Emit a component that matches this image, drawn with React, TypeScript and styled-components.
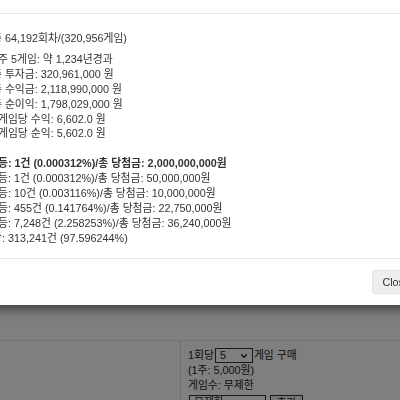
import styled, { createGlobalStyle } from "styled-components";
import { ChevronDown } from "lucide-react";

const GlobalStyle = createGlobalStyle`
    html, body {
        margin: 0;
        padding: 0;
        background: #ffffff;
        overflow: hidden;
    }
    body {
        font-family: "Liberation Sans", "Noto Sans CJK KR", sans-serif;
        font-size: 10.8px;
        line-height: 14.9px;
        color: #333333;
    }
`;

const summary = [
    "1주 5게임: 약 1,234년경과",
    "총 투자금: 320,961,000 원",
    "총 수익금: 2,118,990,000 원",
    "총 순이익: 1,798,029,000 원",
    "1게임당 수익: 6,602.0 원",
    "1게임당 순익: 5,602.0 원",
];

const prizes = [
    { text: "1등: 1건 (0.000312%)/총 당첨금: 2,000,000,000원", strong: true },
    { text: "2등: 1건 (0.000312%)/총 당첨금: 50,000,000원", strong: false },
    { text: "3등: 10건 (0.003116%)/총 당첨금: 10,000,000원", strong: false },
    { text: "4등: 455건 (0.141764%)/총 당첨금: 22,750,000원", strong: false },
    { text: "5등: 7,248건 (2.258253%)/총 당첨금: 36,240,000원", strong: false },
    { text: "꽝: 313,241건 (97.596244%)", strong: false },
];

const App = () => {
    return (
        <>
            <GlobalStyle />
            <StyledPage>
                <StyledTopArea />
                <StyledMainRow>
                    <StyledLeftCol />
                    <StyledRightCol>
                        <StyledLine>
                            1회당
                            <StyledSelect $width={38}>
                                <span>5</span>
                                <ChevronDown size={10} strokeWidth={3} />
                            </StyledSelect>
                            게임 구매
                        </StyledLine>
                        <StyledLine>(1주: 5,000원)</StyledLine>
                        <StyledLine>게임수: 무제한</StyledLine>
                        <StyledControlRow>
                            <StyledSelect $width={77}>
                                <span>무제한</span>
                                <ChevronDown size={10} strokeWidth={3} />
                            </StyledSelect>
                            <StyledSmallButton>추가</StyledSmallButton>
                        </StyledControlRow>
                    </StyledRightCol>
                </StyledMainRow>
            </StyledPage>

            <StyledBackdrop />

            <StyledModal>
                <StyledHeader>
                    <StyledTitle>시뮬레이션 결과</StyledTitle>
                </StyledHeader>
                <StyledBody>
                    <StyledLead>총 64,192회차/(320,956게임)</StyledLead>
                    {summary.map((line, index) => (
                        <StyledLine key={index}>{line}</StyledLine>
                    ))}
                    <StyledSpacer />
                    {prizes.map((prize, index) => (
                        <StyledPrize $strong={prize.strong} key={index}>
                            {prize.text}
                        </StyledPrize>
                    ))}
                </StyledBody>
                <StyledFooter>
                    <StyledCloseButton>Close</StyledCloseButton>
                </StyledFooter>
            </StyledModal>
        </>
    );
};

const StyledPage = styled.div`
    display: flex;
    flex-direction: column;
    width: 400px;
    min-height: 400px;
    background: #ffffff;
`;

const StyledTopArea = styled.div`
    height: 340px;
    border-bottom: 1px solid #e8e8e8;
`;

const StyledMainRow = styled.div`
    display: flex;
`;

const StyledLeftCol = styled.div`
    width: 180px;
    min-height: 80px;
    border-right: 1px solid #e0e0e0;
`;

const StyledRightCol = styled.div`
    display: flex;
    flex-direction: column;
    padding: 7px 0 0 7px;
    color: #222222;
`;

const StyledLine = styled.div`
    display: flex;
    align-items: center;
    white-space: nowrap;
`;

const StyledSelect = styled.span<{ $width: number }>`
    display: inline-flex;
    align-items: center;
    justify-content: space-between;
    box-sizing: border-box;
    width: ${(p) => p.$width}px;
    height: 15px;
    margin: 0 1px;
    padding: 0 3px 0 4px;
    border: 1px solid #333333;
    background: #ffffff;
`;

const StyledControlRow = styled.div`
    display: flex;
    gap: 3px;
    margin-top: 2px;
`;

const StyledSmallButton = styled.span`
    display: inline-flex;
    align-items: center;
    justify-content: center;
    box-sizing: border-box;
    width: 33px;
    height: 17px;
    border: 1px solid #333333;
    background: #efefef;
`;

const StyledBackdrop = styled.div`
    position: fixed;
    inset: 0;
    background: rgba(0, 0, 0, 0.5);
`;

const StyledModal = styled.div`
    position: fixed;
    top: -30px;
    left: -19px;
    width: 450px;
    display: flex;
    flex-direction: column;
    background: #ffffff;
    border-radius: 4px;
    box-shadow: 0 4px 11px rgba(0, 0, 0, 0.5);
`;

const StyledHeader = styled.div`
    height: 43px;
    padding: 0 11px;
    border-bottom: 1px solid #e5e5e5;
`;

const StyledTitle = styled.div`
    padding-top: 8px;
    font-size: 13.5px;
    line-height: 15px;
`;

const StyledBody = styled.div`
    display: flex;
    flex-direction: column;
    padding: 17px 11px 12px;
`;

const StyledLead = styled.div`
    margin-bottom: 6px;
    white-space: nowrap;
`;

const StyledSpacer = styled.div`
    height: 14.9px;
`;

const StyledPrize = styled.div<{ $strong: boolean }>`
    white-space: nowrap;
    font-weight: ${(p) => (p.$strong ? "bold" : "normal")};
`;

const StyledFooter = styled.div`
    display: flex;
    justify-content: flex-end;
    padding: 11px;
    border-top: 1px solid #e5e5e5;
`;

const StyledCloseButton = styled.button`
    box-sizing: border-box;
    height: 24px;
    padding: 0 9px;
    font-family: "Liberation Sans", "Noto Sans CJK KR", sans-serif;
    font-size: 10.8px;
    color: #333333;
    background: #eeeeee;
    border: 1px solid #e4e4e4;
    border-radius: 3px;
`;

export default App;
